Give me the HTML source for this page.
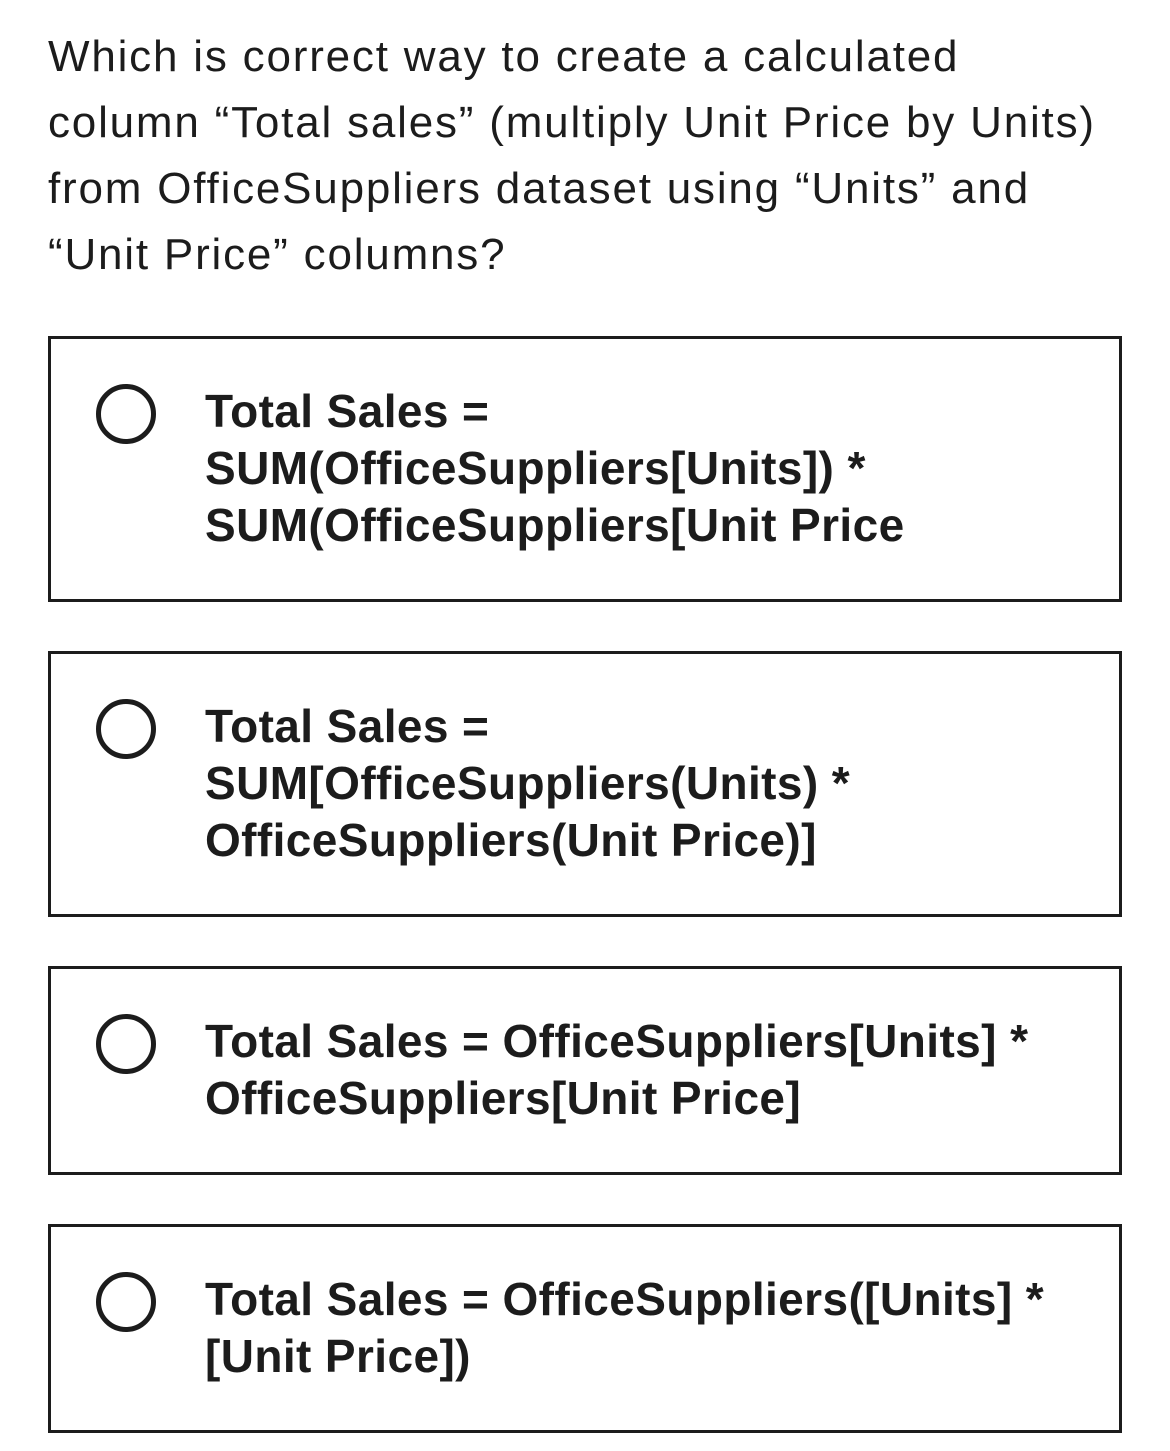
<!DOCTYPE html>
<html><head><meta charset="utf-8"><style>
html,body{margin:0;padding:0;background:#fff;}
body{width:1170px;height:1451px;position:relative;overflow:hidden;font-family:"Liberation Sans",Arial,sans-serif;color:#1c1c1c;}
.q{position:absolute;left:48px;top:24px;width:1110px;font-size:44px;line-height:66px;letter-spacing:1.8px;white-space:nowrap;}
.box{position:absolute;left:48px;width:1068px;border:3px solid #1c1c1c;}
.r{position:absolute;left:45px;top:45px;width:50px;height:50px;border:5px solid #1c1c1c;border-radius:50%;}
.t{position:absolute;left:154px;top:44px;width:900px;font-size:46px;line-height:57px;font-weight:bold;letter-spacing:0.4px;white-space:nowrap;}
</style></head><body>
<div class="q">Which is correct way to create a calculated<br>column “Total sales” (multiply Unit Price by Units)<br>from OfficeSuppliers dataset using “Units” and<br>“Unit Price” columns?</div>
<div class="box" style="top:336px;height:260px"><div class="r"></div><div class="t">Total Sales =<br>SUM(OfficeSuppliers[Units]) *<br>SUM(OfficeSuppliers[Unit Price</div></div>
<div class="box" style="top:651px;height:260px"><div class="r"></div><div class="t">Total Sales =<br>SUM[OfficeSuppliers(Units) *<br>OfficeSuppliers(Unit Price)]</div></div>
<div class="box" style="top:966px;height:203px"><div class="r"></div><div class="t">Total Sales = OfficeSuppliers[Units] *<br>OfficeSuppliers[Unit Price]</div></div>
<div class="box" style="top:1224px;height:203px"><div class="r"></div><div class="t">Total Sales = OfficeSuppliers([Units] *<br>[Unit Price])</div></div>
</body></html>
